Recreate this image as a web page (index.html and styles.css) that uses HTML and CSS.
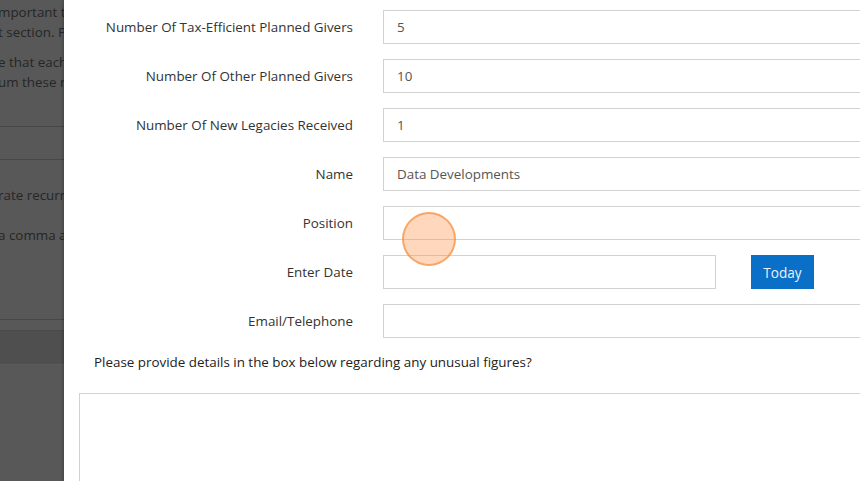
FILE: index.html
```html
<!DOCTYPE html>
<html>
<head>
<meta charset="utf-8">
<link rel="stylesheet" href="styles.css">
</head>
<body>
<div class="page">
  <aside class="backdrop">
    <div class="bg-block top">
      <p class="bg-line">mportant to</p>
      <p class="bg-line">t section. Pl</p>
      <p class="bg-line gap">e that each</p>
      <p class="bg-line">um these nu</p>
    </div>
    <div class="bg-rule r1"></div>
    <div class="bg-rule r2"></div>
    <div class="bg-block mid">
      <p class="bg-line">rate recurr</p>
      <p class="bg-line gap2">a comma an</p>
    </div>
    <div class="bg-rule r3"></div>
    <div class="bg-band"></div>
  </aside>
  <main class="modal">
    <div class="form-grid">
      <label class="lbl">Number Of Tax-Efficient Planned Givers</label>
      <div class="field"><input class="input" value="5"></div>
      <label class="lbl">Number Of Other Planned Givers</label>
      <div class="field"><input class="input" value="10"></div>
      <label class="lbl">Number Of New Legacies Received</label>
      <div class="field"><input class="input" value="1"></div>
      <label class="lbl">Name</label>
      <div class="field"><input class="input" value="Data Developments"></div>
      <label class="lbl">Position</label>
      <div class="field"><input class="input" value=""></div>
      <label class="lbl">Enter Date</label>
      <div class="field date-field"><input class="input date" value=""><button class="btn-today">Today</button></div>
      <label class="lbl">Email/Telephone</label>
      <div class="field"><input class="input" value=""></div>
    </div>
    <p class="question">Please provide details in the box below regarding any unusual figures?</p>
    <textarea class="details"></textarea>
  </main>
  <div class="click-marker"></div>
</div>
</body>
</html>
```
FILE: styles.css
```css
html, body {
  margin: 0;
  padding: 0;
  width: 860px;
  height: 481px;
  overflow: hidden;
  font-family: "Open Sans", "Liberation Sans", sans-serif;
}
.page {
  display: flex;
  width: 860px;
  height: 481px;
  position: relative;
}
.backdrop {
  width: 64px;
  flex: none;
  background: #585858;
  overflow: hidden;
  display: flex;
  flex-direction: column;
  color: #262626;
  font-size: 13.4px;
  white-space: nowrap;
}
.bg-block { margin-left: -2px; }
.bg-block.top { padding-top: 2px; }
.bg-line {
  margin: 0;
  line-height: 20px;
}
.bg-line.gap { margin-top: 10px; }
.bg-line.gap2 { margin-top: 20px; }
.bg-rule {
  height: 1px;
  background: #474747;
  flex: none;
}
.bg-rule.r1 { margin-top: 34px; }
.bg-rule.r2 { margin-top: 32px; }
.bg-block.mid { padding-top: 25px; }
.bg-rule.r3 { margin-top: 74px; }
.bg-band {
  margin-top: 10px;
  height: 33px;
  background: #4f4f4f;
  border-top: 1px solid #4a4a4a;
  border-bottom: 1px solid #5c5c5c;
}
.modal {
  flex: none;
  width: 840px;
  background: #fff;
  box-shadow: -1px 0 3px rgba(0,0,0,0.25);
  padding: 10px 0 0 15px;
  box-sizing: border-box;
}
.form-grid {
  display: grid;
  grid-template-columns: 274px 1fr;
  column-gap: 30px;
  row-gap: 15px;
  grid-auto-rows: 34px;
}
.lbl {
  display: flex;
  align-items: center;
  justify-content: flex-end;
  font-size: 13.4px;
  color: #333;
  padding-bottom: 1px;
}
.field {
  display: flex;
  align-items: stretch;
}
.input {
  width: 100%;
  box-sizing: border-box;
  height: 34px;
  border: 1px solid #d2d2d2;
  padding: 0 13px;
  font-family: "Open Sans", "Liberation Sans", sans-serif;
  font-size: 13.4px;
  color: #555;
  outline: none;
  margin: 0;
}
.date-field { gap: 35px; }
.input.date { width: 333px; flex: none; }
.btn-today {
  width: 63px;
  height: 34px;
  border: none;
  background: #0a6fc7;
  color: #eaf2fb;
  font-family: "Open Sans", "Liberation Sans", sans-serif;
  font-size: 13.6px;
  padding: 0;
  flex: none;
}
.question {
  margin: 14px 0 0 15px;
  font-size: 13.4px;
  line-height: 20px;
  color: #222;
}
.details {
  display: block;
  margin-top: 21px;
  width: 100%;
  height: 120px;
  box-sizing: border-box;
  border: 1px solid #d2d2d2;
  resize: none;
}
.click-marker {
  position: absolute;
  left: 402px;
  top: 212px;
  width: 50px;
  height: 50px;
  border-radius: 50%;
  background: rgba(255, 150, 80, 0.38);
  border: 2px solid rgba(242, 140, 60, 0.65);
}
```
